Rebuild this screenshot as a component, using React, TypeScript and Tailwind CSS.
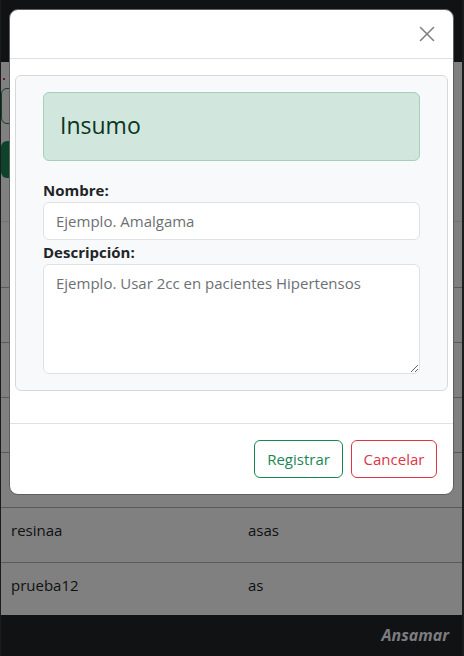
import { X } from 'lucide-react';

const rows = [
  { nombre: '', desc: '' },
  { nombre: '', desc: '' },
  { nombre: '', desc: '' },
  { nombre: '', desc: '' },
  { nombre: 'resinaa', desc: 'asas' },
  { nombre: 'prueba12', desc: 'as' },
];

const font = { fontFamily: '"Open Sans", "Noto Sans", sans-serif' };

function Background() {
  return (
    <div className="flex flex-col h-full">
      <div className="h-[62px] shrink-0 bg-[#111214]" />
      <div className="flex-1 bg-[#808080] flex flex-col">
        <div className="h-[26px] pl-[2px] pt-[16px]">
          <div className="w-[2px] h-[2px] bg-[#6e1a20]" />
        </div>
        <div className="h-[36px] w-[120px] rounded-md border border-[#0c432a]" />
        <div className="h-[17px]" />
        <div className="h-[37px] w-[120px] rounded-md bg-[#0c432a]" />
        <div className="h-[44px] border-b border-[#737373]" />
        <div className="h-[66px] border-b border-[#5a5a5a]" />
        {rows.map((r, i) => (
          <div
            key={i}
            className={`flex items-center text-[15px] text-[#0f1011] ${i < rows.length - 1 ? 'h-[55px] border-b border-[#5a5a5a] pb-[10px]' : 'h-[52px] pb-[8px]'}`}
            style={font}
          >
            <div className="w-[247px] pl-[10px]">{r.nombre}</div>
            <div>{r.desc}</div>
          </div>
        ))}
      </div>
      <div
        className="h-[41px] shrink-0 bg-[#111214] flex items-center justify-end pr-[13px] pb-[2px] text-[16px] font-bold italic text-[#7b7d80]"
        style={font}
      >
        Ansamar
      </div>
    </div>
  );
}

function Modal() {
  return (
    <div
      className="absolute left-[8px] top-[9px] w-[445px] bg-white rounded-[9px] border border-[#5f5f5f] overflow-hidden text-[#212529]"
      style={font}
    >
      <div className="h-[49px] border-b border-[#dee2e6] flex items-center justify-end pr-[13px]">
        <X className="w-[26px] h-[26px] text-[#808080]" strokeWidth={1.5} />
      </div>
      <div className="px-[5px] pt-[16px] pb-[32px]">
        <div className="bg-[#f8f9fa] border border-[#d6d8da] rounded-[6px] px-[27px] pt-[16px] pb-[16px]">
          <div className="bg-[#d1e7dd] border border-[#a3cfbb] rounded-[6px] h-[69px] px-[16px] pt-[18px]">
            <h3 className="text-[23px] leading-[29px] text-[#0a3622]">Insumo</h3>
          </div>
          <label className="block mt-[17px] text-[15px] font-bold leading-[24px]">Nombre:</label>
          <input
            className="block w-full h-[38px] rounded-[6px] border border-[#dee2e6] bg-white px-[12px] text-[15px] placeholder:text-[#6c7074] outline-none"
            placeholder="Ejemplo. Amalgama"
          />
          <label className="block text-[15px] font-bold leading-[24px]">Descripción:</label>
          <textarea
            className="block w-full h-[110px] rounded-[6px] border border-[#dee2e6] bg-white px-[12px] py-[6px] text-[15px] leading-[24px] placeholder:text-[#6c7074] outline-none"
            placeholder="Ejemplo. Usar 2cc en pacientes Hipertensos"
          />
        </div>
      </div>
      <div className="border-t border-[#dee2e6] h-[71px] flex items-center justify-end gap-[8px] pr-[16px]">
        <button className="h-[38px] w-[89px] rounded-[6px] border border-[#198754] text-[#198754] text-[15px]">
          Registrar
        </button>
        <button className="h-[38px] w-[86px] rounded-[6px] border border-[#dc3545] text-[#dc3545] text-[15px]">
          Cancelar
        </button>
      </div>
    </div>
  );
}

export default function App() {
  return (
    <div className="w-[464px] h-[656px] relative overflow-hidden border-l border-r-2 border-[#1c1c1c] bg-[#808080]">
      <Background />
      <Modal />
    </div>
  );
}
